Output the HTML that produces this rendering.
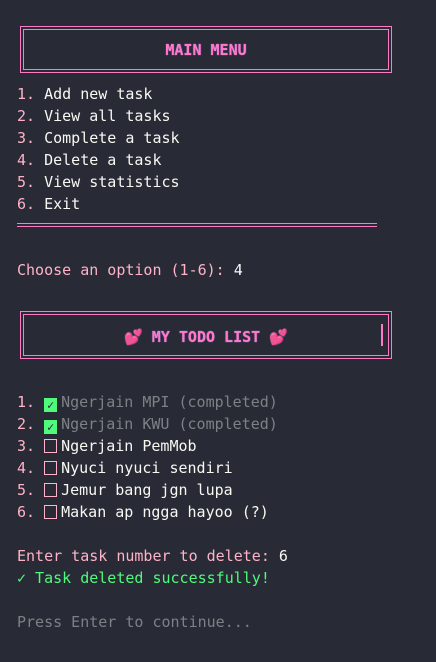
<!DOCTYPE html>
<html><head><style>
body{margin:0;background:#282a36;width:436px;height:662px;overflow:hidden;font-family:"DejaVu Sans Mono","Liberation Mono",monospace;font-size:15px;color:#f8f8f2;position:relative}
.l{position:absolute;left:17px;height:22px;line-height:22px;white-space:pre}
.p{color:#ffb3c8}
.g{color:#50fa7b}
.d{color:#7d8085}
.box{position:absolute;left:20px;width:372px;border:1px solid #ff79c6;box-sizing:border-box}
.box>div{position:absolute;left:2px;right:2px;top:2px;bottom:2px;border:1px solid #ff79c6}
.t{position:absolute;left:0;right:0;text-align:center;color:#ff79c6;font-weight:bold;text-shadow:0 0 1px #c080ff}
.cb{display:inline-block;width:13px;height:14px;border:1px solid #ffb3c8;box-sizing:border-box;vertical-align:-2px;margin-right:4px}
.ck{display:inline-block;width:13px;height:14px;background:#50fa7b;color:#282a36;font-size:12px;line-height:14px;text-align:center;vertical-align:-2px;margin-right:4px;font-weight:bold}
</style></head><body>
<div class="box" style="top:26px;height:47px"><div></div><span class="t" style="top:12px;line-height:22px">MAIN MENU</span></div>
<div class="l" style="top:83px"><span class="p">1.</span> Add new task</div>
<div class="l" style="top:105px"><span class="p">2.</span> View all tasks</div>
<div class="l" style="top:127px"><span class="p">3.</span> Complete a task</div>
<div class="l" style="top:149px"><span class="p">4.</span> Delete a task</div>
<div class="l" style="top:171px"><span class="p">5.</span> View statistics</div>
<div class="l" style="top:193px"><span class="p">6.</span> Exit</div>
<div style="position:absolute;left:17px;width:360px;top:223px;height:1px;background:#ff79c6"></div>
<div style="position:absolute;left:17px;width:360px;top:226px;height:1px;background:#ff79c6"></div>
<div class="l" style="top:259px"><span class="p">Choose an option (1-6):</span> 4</div>
<div class="box" style="top:311px;height:48px"><div></div><span class="t" style="top:14px;line-height:22px"><span style="color:#ff3d7f">💕</span> MY TODO LIST <span style="color:#ff3d7f">💕</span></span></div>
<div style="position:absolute;left:381px;top:324px;width:2px;height:22px;background:#ff79c6"></div>
<div class="l" style="top:391px"><span class="p">1.</span> <span class="ck">✓</span><span class="d">Ngerjain MPI (completed)</span></div>
<div class="l" style="top:413px"><span class="p">2.</span> <span class="ck">✓</span><span class="d">Ngerjain KWU (completed)</span></div>
<div class="l" style="top:435px"><span class="p">3.</span> <span class="cb"></span>Ngerjain PemMob</div>
<div class="l" style="top:457px"><span class="p">4.</span> <span class="cb"></span>Nyuci nyuci sendiri</div>
<div class="l" style="top:479px"><span class="p">5.</span> <span class="cb"></span>Jemur bang jgn lupa</div>
<div class="l" style="top:501px"><span class="p">6.</span> <span class="cb"></span>Makan ap ngga hayoo (?)</div>
<div class="l" style="top:545px"><span class="p">Enter task number to delete:</span> 6</div>
<div class="l g" style="top:567px">✓ Task deleted successfully!</div>
<div class="l d" style="top:611px">Press Enter to continue...</div>
</body></html>
